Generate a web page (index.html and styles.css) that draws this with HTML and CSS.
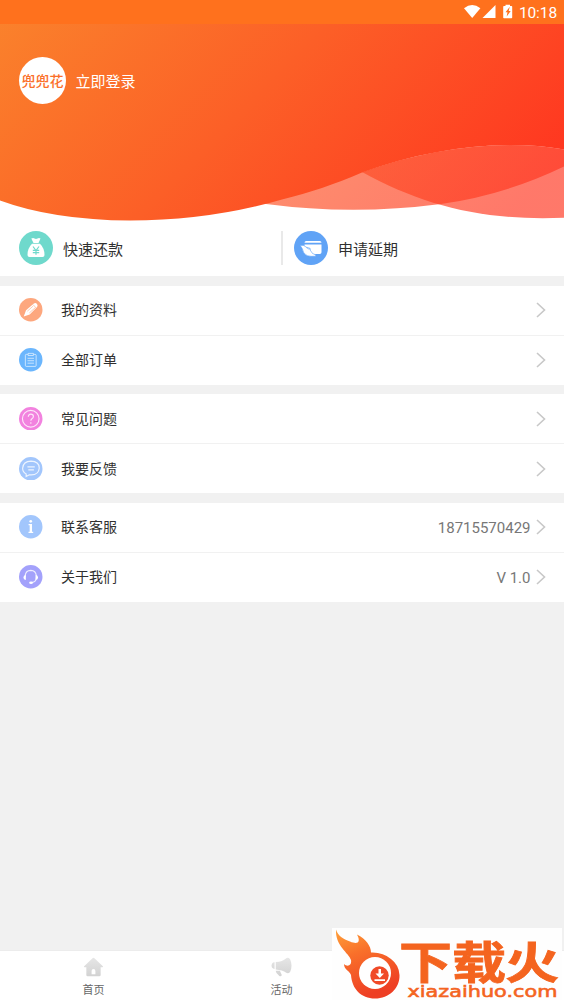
FILE: index.html
```html
<!DOCTYPE html>
<html lang="zh-CN">
<head>
<meta charset="utf-8">
<title>我的</title>
<link rel="stylesheet" href="styles.css">
</head>
<body>
<div class="screen">
  <div class="status">
    <svg class="status-icons" viewBox="0 0 54 24">
      <path d="M0 8.2Q8.2 2 16.4 8.2L8.2 18z"/>
      <path d="M31.5 5v13H18.5z"/>
      <path d="M40 6h1.500V4.800h4.500V6h1.500q.7 0 .7.800v10.700q0 .8-.8.800h-7.400q-.8 0-.8-.8V6.800q0-.8.8-.8z"/>
      <path class="bolt" d="M45.800 6.800l-4.300 5.400h2l-.8 4.300 4-5.500h-2z"/>
    </svg>
    <span class="clock">10:18</span>
  </div>
  <header class="hero">
    <svg class="waves" viewBox="0 0 564 200">
      <defs>
        <linearGradient id="sun" gradientUnits="userSpaceOnUse" x1="-20" y1="-20" x2="350" y2="350">
          <stop offset="0" stop-color="#fa852c"/>
          <stop offset=".5" stop-color="#fc5f27"/>
          <stop offset="1" stop-color="#ff3620"/>
        </linearGradient>
      </defs>
      <path class="wave" fill="url(#sun)" d="M362 148C427 125 500 114 564 125.500V193.700C483 197 424 182 362 148z"/>
      <path class="wave" fill="url(#sun)" d="M255 178L340 150L362 148C427 125 500 114 564 125.500V142.500Q505 171 441 180Q353 191.500 266 180z"/>
      <path fill="url(#sun)" d="M0 0H564V125.500C500 114 427 125 362 148.500C333 161 311 168 282 175.500Q210 196.500 130 196.600Q53 196 0 176.500z"/>
    </svg>
    <div class="user">
      <div class="avatar"><span>兜兜花</span></div>
      <span class="login">立即登录</span>
    </div>
  </header>

  <section class="quick">
    <a class="quick-item">
      <svg class="quick-icon" viewBox="0 0 34 34">
        <circle cx="17" cy="17" r="17" fill="#6fd9cc"/>
        <path fill="#fff" d="M12.300 7.500q2-1 3.200 0 1.500.9 3 0 1.500-1 3 0l-2 4.500h-5z"/>
        <path fill="#fff" d="M13 12.800h8q4.500 4.500 4.500 11.200 0 2-2 2h-13q-2 0-2-2 0-6.700 4.500-11.200z"/>
        <path stroke="#6fd9cc" stroke-width="1.200" fill="none" d="M14 15.500l3 4 3-4M17 19v4.800M13.800 19.300h6.400M13.800 21.700h6.400"/>
      </svg>
      <span>快速还款</span>
    </a>
    <a class="quick-item split">
      <svg class="quick-icon" viewBox="0 0 34 34">
        <circle cx="17" cy="17" r="17" fill="#60a3f6"/>
        <path fill="#fff" d="M10.500 11.800q0-1.900 1.700-1.900h13.600q1.700 0 1.700 1.900zM10.500 13.500h17v7.700q0 1.800-1.700 1.800H19l-8.500-8z"/>
        <path fill="#fff" stroke="#60a3f6" stroke-width=".6" d="M6.300 14.600q3.400-1.200 6 1.600l3.500 1q1 .8.300 1.800l2.600 3.600 3 1.200v1.400q-5 .5-8.300-.5-4.300-1.500-5.100-7z"/>
        <path fill="none" stroke="#60a3f6" stroke-width=".7" d="M12.300 16.500q2.500 2 4 1.500"/>
      </svg>
      <span>申请延期</span>
    </a>
  </section>

  <section class="group">
    <a class="row">
      <svg class="row-icon" viewBox="0 0 24 24">
        <circle cx="12" cy="12" r="12" fill="#fda77e"/>
        <path fill="#fff" d="M4.800 19l2.400-6.500 8-6.800q1.500-1.400 3 .2t.3 3.200l-7.600 7.700z"/>
        <path stroke="#fda77e" stroke-width=".6" fill="none" d="M8.500 13.500l6-5.300M10.500 15.300l6-5.300M14.500 6.800l3 3.500"/>
      </svg>
      <span class="label">我的资料</span>
      <svg class="chevron" viewBox="0 0 10 16"><path d="M1 1l7.500 7L1 15"/></svg>
    </a>
    <a class="row">
      <svg class="row-icon" viewBox="0 0 24 24">
        <circle cx="12" cy="12" r="12" fill="#6bb6fd"/>
        <path class="thin" d="M9 6.500H7.500q-1 0-1 1v10.300q0 1 1 1h9q1 0 1-1V7.500q0-1-1-1H15M9.300 5.500h5.400v2.200H9.300zM8.700 10.500h6.600M8.700 13h6.600M8.700 15.500h6.600"/>
      </svg>
      <span class="label">全部订单</span>
      <svg class="chevron" viewBox="0 0 10 16"><path d="M1 1l7.500 7L1 15"/></svg>
    </a>
  </section>

  <section class="group">
    <a class="row">
      <svg class="row-icon" viewBox="0 0 24 24">
        <circle cx="12" cy="12" r="12" fill="#f282df"/>
        <circle class="line" cx="12" cy="12" r="8.500"/>
        <path class="line" d="M9.500 10q0-2.700 2.600-2.700t2.600 2.300q0 1.500-1.500 2.300-1.100.7-1.100 2.100M12.100 15.500v1.500"/>
      </svg>
      <span class="label">常见问题</span>
      <svg class="chevron" viewBox="0 0 10 16"><path d="M1 1l7.500 7L1 15"/></svg>
    </a>
    <a class="row">
      <svg class="row-icon" viewBox="0 0 24 24">
        <circle cx="12" cy="12" r="12" fill="#a2c6fc"/>
        <path class="line" d="M7.300 20v-2.700Q3.700 15.500 3.700 11.500 4.200 4.500 12.300 4.300 20.500 4.500 20.700 11.200 20.300 18 12.500 18.300L10.500 18.200zM8.600 10h7.500M9.500 13.200h5.700"/>
      </svg>
      <span class="label">我要反馈</span>
      <svg class="chevron" viewBox="0 0 10 16"><path d="M1 1l7.500 7L1 15"/></svg>
    </a>
  </section>

  <section class="group">
    <a class="row">
      <svg class="row-icon" viewBox="0 0 24 24">
        <circle cx="12" cy="12" r="12" fill="#a2c6fc"/>
        <circle cx="12" cy="6.500" r="1.400" fill="#fff"/>
        <path fill="#fff" d="M9.800 9.300h3.500v7.900h1.200v1.200H9.700v-1.200h1.200v-6.700H9.800z"/>
      </svg>
      <span class="label">联系客服</span>
      <span class="value">18715570429</span>
      <svg class="chevron" viewBox="0 0 10 16"><path d="M1 1l7.500 7L1 15"/></svg>
    </a>
    <a class="row">
      <svg class="row-icon" viewBox="0 0 24 24">
        <circle cx="12" cy="12" r="12" fill="#a3a1fb"/>
        <path class="line" d="M6.300 12V11q.5-5.300 5.700-5.500 5.200.2 5.700 5.500v1.500q-.2 5-4.700 5.500"/>
        <path fill="#fff" d="M7 10.300v5q-2.500-.2-2.500-2.500t2.500-2.500zM17 10.300v5q2.500-.2 2.500-2.500t-2.500-2.500z"/>
        <ellipse cx="12.300" cy="18.200" rx="1.900" ry="1.300" fill="#fff"/>
      </svg>
      <span class="label">关于我们</span>
      <span class="value">V 1.0</span>
      <svg class="chevron" viewBox="0 0 10 16"><path d="M1 1l7.500 7L1 15"/></svg>
    </a>
  </section>

  <nav class="tabs">
    <a class="tab">
      <svg class="tab-icon" viewBox="0 0 22 20">
        <defs><linearGradient id="grey" x1="0" y1="0" x2="0" y2="1"><stop offset="0" stop-color="#e6e6e6"/><stop offset="1" stop-color="#d2d2d2"/></linearGradient></defs>
        <path fill="url(#grey)" d="M10 .8q1-1 2 0l8.800 8.300q.7 1-.8 1.200h-1.500v8q0 1.500-1.500 1.500H5q-1.500 0-1.500-1.500v-8H2q-1.500-.2-.8-1.200z"/>
        <path fill="#fff" d="M9 17.500v-3.300q0-2 2-2t2 2v3.300z"/>
      </svg>
      <span>首页</span>
    </a>
    <a class="tab">
      <svg class="tab-icon" viewBox="0 0 22 20">
        <path fill="url(#grey)" d="M1 6.500q1-1.500 2.700-1.500v7Q2 12 1 10.500q-1-2 0-4zM5 4.800q7-.5 11-4 2-1.200 4 1 1.500 3 1.500 6.700T20 15.200q-2 2-4 .8-4-3-11-3.500zM5 14h4.300l2 4.400q-.3 1.500-2 1.300-1-.2-1.500-1.200L6 16.500Q5 15.500 5 14z"/>
      </svg>
      <span>活动</span>
    </a>
    <a class="tab"></a>
  </nav>

  <svg class="promo" viewBox="0 0 230 72">
    <defs>
      <linearGradient id="flame" x1="0" y1="0" x2=".35" y2="1">
        <stop offset="0" stop-color="#ffa13a"/><stop offset=".4" stop-color="#f9702a"/><stop offset="1" stop-color="#ee3f24"/>
      </linearGradient>
    </defs>
    <rect width="230" height="72" fill="#fefefe"/>
    <path fill="url(#flame)" d="M4 1.500C6 8 11 11 18 13.500C26 17 29 14 25 6.500C34 11 39 18 39 24.500Q51 24 59 31Q67 37 67.500 47C68 60 57 70.500 43 70.500C29 70.500 20 61 19 47C18 43 12 42 12 36C15 39 20 38 19 32C17 25 3 18 4 1.500z"/>
    <circle cx="43" cy="45" r="16" fill="#fff"/>
    <circle cx="47.500" cy="47.500" r="9.200" fill="#f04a28"/>
    <path fill="#fff" d="M46.500 41h2.500v4.500h3L47.800 50 43.500 45.500h3zM42.500 51.300h10.500v1.700H42.500z"/>
    <g class="promo-title">
      <text x="67" y="51" textLength="53" lengthAdjust="spacingAndGlyphs">下</text>
      <text x="120" y="51" textLength="54" lengthAdjust="spacingAndGlyphs">载</text>
      <text x="173" y="51" textLength="54" lengthAdjust="spacingAndGlyphs">火</text>
    </g>
    <text class="promo-url" x="75.500" y="68.500" textLength="150" lengthAdjust="spacingAndGlyphs">xiazaihuo.com</text>
  </svg>
</div>
</body>
</html>
```

FILE: styles.css
```css
* { box-sizing: border-box; }
body {
  margin: 0;
  font-family: Roboto, "Noto Sans CJK SC", sans-serif;
  color: #303030;
}
svg { display: block; flex: none; }
.screen {
  position: relative;
  display: flex;
  flex-direction: column;
  width: 564px;
  height: 1002px;
  overflow: hidden;
  background: #f1f1f1;
}
.status {
  display: flex;
  flex: none;
  justify-content: flex-end;
  height: 24px;
  padding-right: 7px;
  gap: 1px;
  background: #ff711d;
  color: #fff;
}
.status-icons { width: 54px; height: 24px; fill: #fff; }
.status-icons .bolt { fill: #ff711d; }
.clock { font-size: 15.500px; line-height: 26px; letter-spacing: -.1px; }
.hero {
  display: grid;
  flex: none;
  height: 197px;
  background: #fff;
}
.waves { grid-area: 1 / 1; width: 564px; height: 200px; }
.wave { opacity: .67; }
.user {
  grid-area: 1 / 1;
  z-index: 1;
  display: flex;
  align-items: center;
  align-self: start;
  gap: 9.500px;
  padding: 33px 0 0 19px;
}
.avatar {
  display: flex;
  align-items: center;
  justify-content: center;
  width: 47px;
  height: 47px;
  border-radius: 50%;
  background: #fff;
  color: #fb6f29;
  font-size: 14px;
  font-weight: 500;
  line-height: 20px;
  white-space: nowrap;
}
.login { padding-top: 2px; color: #fff; font-size: 15px; line-height: 22px; }
.quick {
  display: grid;
  flex: none;
  grid-template-columns: 281px 283px;
  align-content: start;
  height: 55px;
  padding-top: 10px;
  background: #fff;
  font-size: 15px;
  z-index: 1;
}
.quick-item {
  display: flex;
  align-items: center;
  gap: 10px;
  height: 34px;
  padding-left: 19px;
}
.split { padding-left: 11px; border-left: 2px solid #e9e9e9; }
.quick-icon { width: 34px; height: 34px; }
.group { flex: none; margin-top: 9.500px; background: #fff; }
.row {
  display: flex;
  align-items: center;
  height: 49px;
  padding: 0 18px 0 19px;
  font-size: 14px;
}
.row + .row { height: 50px; border-top: 1px solid #f1f1f1; }
.row-icon { width: 23.500px; height: 23.500px; margin-right: 18.500px; }
.label { flex: 1; padding-bottom: 2px; }
.value { margin-right: 5.500px; padding-top: 1px; color: #777; font-size: 15px; }
.chevron {
  width: 10px;
  height: 16px;
  fill: none;
  stroke: #c8c8c8;
  stroke-width: 1.600;
}
.line { fill: none; stroke: #fff; stroke-width: 1.200; opacity: .8; }
.thin { fill: none; stroke: #fff; stroke-width: .9; opacity: .7; }
.tabs {
  display: flex;
  flex: none;
  height: 52px;
  margin-top: auto;
  border-top: 1px solid #ececec;
  background: #fff;
}
.tab {
  display: flex;
  flex: 1;
  flex-direction: column;
  align-items: center;
  gap: 6px;
  padding: 6px 1px 0 0;
  color: #666;
  font-size: 11px;
  line-height: 16px;
}
.tab-icon { width: 21px; height: 20px; }
.promo {
  position: absolute;
  right: 2px;
  bottom: 2px;
  width: 230px;
  height: 72px;
  overflow: visible;
}
.promo-title { fill: #f4641f; stroke: #f4641f; stroke-width: .8; font: 700 44px "Noto Sans CJK SC", sans-serif; }
.promo-url { fill: #f4641f; stroke: #f4641f; stroke-width: .6; font: 400 16.500px "DejaVu Sans", sans-serif; }
```
